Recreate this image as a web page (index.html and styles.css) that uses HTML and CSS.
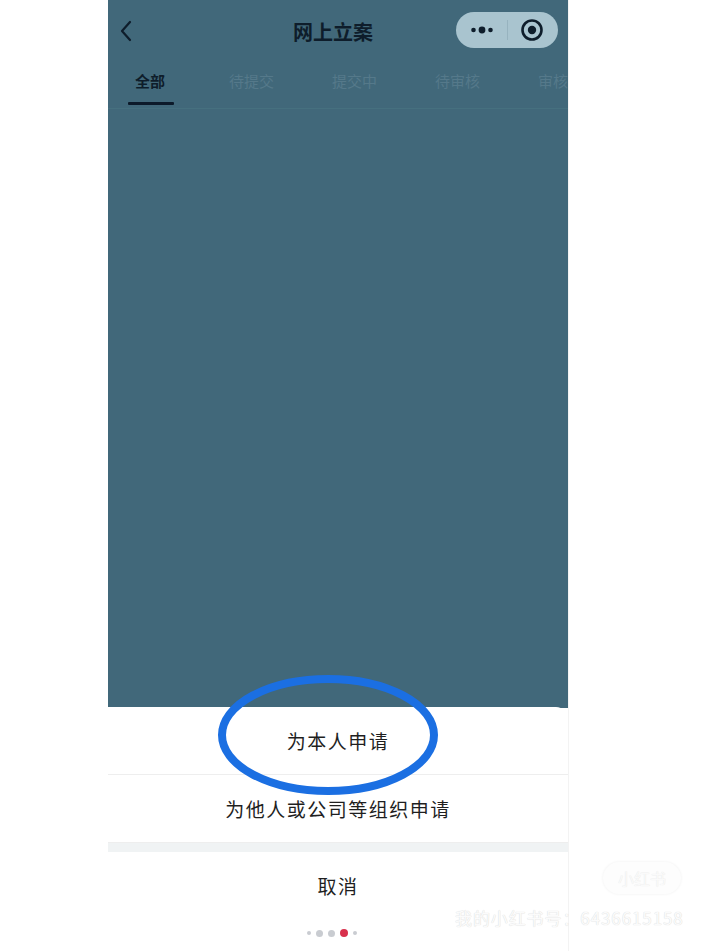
FILE: index.html
```html
<!DOCTYPE html>
<html lang="zh-CN">
<head>
<meta charset="utf-8">
<title>网上立案</title>
<link rel="stylesheet" href="styles.css">
</head>
<body>
<div class="page">
  <div class="phone">
    <div class="screen">
      <div class="nav">
        <svg class="back" width="14" height="22" viewBox="0 0 14 22"><polyline points="11,2 3,11 11,20" fill="none" stroke="#0e1d2b" stroke-width="2.2" stroke-linecap="round" stroke-linejoin="round"/></svg>
        <div class="title">网上立案</div>
        <div class="capsule">
          <div class="cap-btn">
            <svg width="24" height="10" viewBox="0 0 24 10"><circle cx="3.5" cy="5" r="2.3" fill="#0e1d2b"/><circle cx="12" cy="5" r="3.4" fill="#0e1d2b"/><circle cx="20.5" cy="5" r="2.3" fill="#0e1d2b"/></svg>
          </div>
          <div class="cap-sep"></div>
          <div class="cap-btn">
            <svg width="24" height="24" viewBox="0 0 24 24"><circle cx="12" cy="12" r="9.5" fill="none" stroke="#0e1d2b" stroke-width="2.6"/><circle cx="12" cy="12" r="4.2" fill="#0e1d2b"/></svg>
          </div>
        </div>
      </div>
      <div class="tabs">
        <div class="tab active">全部</div>
        <div class="tab">待提交</div>
        <div class="tab">提交中</div>
        <div class="tab">待审核</div>
        <div class="tab">审核通过</div>
      </div>
    </div>
    <div class="sheet">
      <div class="row">为本人申请</div>
      <div class="row">为他人或公司等组织申请</div>
      <div class="band"></div>
      <div class="row cancel">取消</div>
      <div class="dots">
        <span class="dot s"></span><span class="dot m"></span><span class="dot m"></span><span class="dot r"></span><span class="dot s"></span>
      </div>
    </div>
    <svg class="ring" width="228" height="124" viewBox="0 0 228 124"><ellipse cx="114" cy="62" rx="106" ry="56" fill="none" stroke="#1b6fe2" stroke-width="8"/></svg>
  </div>
  <div class="wm-pill">小红书</div>
  <div class="watermark">我的小红书号：6436615158</div>
</div>
</body>
</html>
```
FILE: styles.css
```css
html, body {
  margin: 0;
  padding: 0;
  background: #ffffff;
}
body {
  font-family: "Noto Sans CJK SC", "Noto Sans", sans-serif;
}
.page {
  position: relative;
  width: 713px;
  height: 951px;
  overflow: hidden;
  background: #ffffff;
}
.phone {
  position: relative;
  margin-left: 108px;
  width: 460px;
  height: 951px;
  display: flex;
  flex-direction: column;
  border-right: 1px solid #f3f3f3;
}
.screen {
  height: 708px;
  background: #41687a;
  display: flex;
  flex-direction: column;
}
.nav {
  position: relative;
  height: 64px;
  display: flex;
  align-items: center;
  justify-content: space-between;
  padding: 0 10px 0 10px;
}
.back {
  margin-left: 1px;
  margin-top: -2px;
}
.title {
  position: absolute;
  left: 0;
  right: 10px;
  top: 16px;
  text-align: center;
  font-size: 20px;
  font-weight: 700;
  line-height: 32px;
  color: #0e1d2b;
}
.capsule {
  display: flex;
  align-items: center;
  width: 102px;
  height: 36px;
  margin-top: -4px;
  border-radius: 18px;
  background: #a9c4cf;
}
.cap-btn {
  flex: 1;
  display: flex;
  align-items: center;
  justify-content: center;
}
.cap-btn:first-child {
  padding-left: 2px;
}
.cap-btn:last-child {
  padding-right: 2px;
}
.cap-sep {
  width: 1px;
  height: 20px;
  background: #97b3bf;
}
.tabs {
  display: flex;
  align-items: flex-start;
  gap: 58px;
  padding-left: 27px;
  height: 44px;
  border-bottom: 1px solid #46707f;
  white-space: nowrap;
  overflow: hidden;
}
.tab {
  position: relative;
  font-size: 15px;
  line-height: 34px;
  color: #55798a;
}
.tab.active {
  min-width: 36px;
  font-weight: 700;
  color: #0e1d2b;
}
.tab.active::after {
  content: "";
  position: absolute;
  left: -7px;
  top: 38px;
  width: 46px;
  height: 3px;
  background: #0c1a2a;
  border-radius: 1px;
}
.sheet {
  flex: 1;
  background: #ffffff;
  border-top-right-radius: 12px;
  margin-top: -1px;
  display: flex;
  flex-direction: column;
}
.row {
  height: 67px;
  display: flex;
  align-items: center;
  justify-content: center;
  font-size: 19px;
  letter-spacing: 1.5px;
  color: #1f1f1f;
  border-bottom: 1px solid #eeeeee;
}
.row.cancel {
  height: 64px;
  border-bottom: none;
  padding-top: 1px;
}
.band {
  height: 9px;
  background: #f0f3f4;
}
.dots {
  display: flex;
  align-items: center;
  justify-content: center;
  gap: 5px;
  margin-top: 10px;
  height: 12px;
  padding-right: 13px;
}
.dot {
  display: block;
  border-radius: 50%;
  background: #c9ccd1;
}
.dot.s {
  width: 4px;
  height: 4px;
}
.dot.m {
  width: 7px;
  height: 7px;
}
.dot.r {
  width: 8px;
  height: 8px;
  background: #d8304c;
}
.ring {
  position: absolute;
  left: 106px;
  top: 673px;
}
.watermark {
  position: absolute;
  left: 455px;
  top: 905px;
  font-size: 17px;
  letter-spacing: 0.9px;
  color: #fbfbfb;
  text-shadow: 0 0 1px #dcdcdc, 0 0 1px #e4e4e4;
  white-space: nowrap;
}
.wm-pill {
  position: absolute;
  left: 603px;
  top: 862px;
  width: 78px;
  height: 32px;
  border-radius: 16px;
  background: #fdfdfd;
  box-shadow: 0 0 3px #efefef;
  color: #fafafa;
  text-shadow: 0 0 1px #e2e2e2;
  font-size: 16px;
  line-height: 32px;
  text-align: center;
}
```
